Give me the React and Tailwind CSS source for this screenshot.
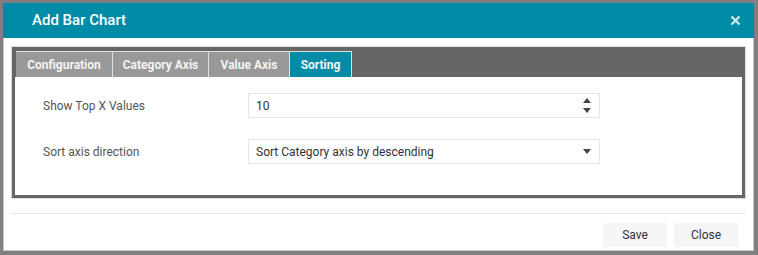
import React from "react";

export default function App() {
  const font = { fontFamily: "Roboto, 'Noto Sans', Arial, sans-serif" };
  return (
    <div className="w-[758px] h-[255px] bg-[#808080] pt-[3px] pl-[3px]" style={font}>
      <div className="w-[751px] h-[248px] bg-white border-x border-b border-[#c8c8c8] flex flex-col">
        <div className="h-[35px] bg-[#008ba7] flex items-center justify-between pl-[29px] pr-[12px] -mx-px">
          <span className="text-white text-[15px] font-medium">Add Bar Chart</span>
          <svg width="11" height="11" viewBox="0 0 11 11" className="mr-[1px]">
            <path d="M1.5 1.5 L9.5 9.5 M9.5 1.5 L1.5 9.5" stroke="#cfe9ef" strokeWidth="2.4" strokeLinecap="butt" />
          </svg>
        </div>
        <div className="mx-[7px] mt-[8px] border border-[#dcdcdc]">
          <div className="bg-[#666666] p-[3px] pt-[4px]">
            <div className="flex h-[26px] ml-[1px]">
              <div className="w-[97px] bg-[#999999] border-t border-r border-[#e0e0e0] flex items-center justify-center text-[12px] font-bold text-[#f4f4f4]">Configuration</div>
              <div className="w-[96px] bg-[#999999] border-t border-r border-[#e0e0e0] flex items-center justify-center text-[12px] font-bold text-[#f4f4f4]">Category Axis</div>
              <div className="w-[81px] bg-[#999999] border-t border-r border-[#e0e0e0] flex items-center justify-center text-[12px] font-bold text-[#f4f4f4]">Value Axis</div>
              <div className="w-[62px] bg-[#008ba7] border-t border-r border-[#e0e0e0] flex items-center justify-center text-[12px] font-bold text-[#f4f4f4]">Sorting</div>
            </div>
            <div className="bg-white h-[118px] pt-[16px]">
              <div className="flex items-center h-[25px]">
                <div className="w-[233px] pl-[28px] text-[12px] text-[#555555]">Show Top X Values</div>
                <div className="w-[352px] h-[25px] border border-[#e6e6e6] flex items-center justify-between pl-[7px] pr-[8px]">
                  <span className="text-[12px] text-[#333333]">10</span>
                  <div className="flex flex-col gap-[5px]">
                    <svg width="8" height="5" viewBox="0 0 8 5"><path d="M4 0 L8 5 L0 5 Z" fill="#444" /></svg>
                    <svg width="8" height="5" viewBox="0 0 8 5"><path d="M0 0 L8 0 L4 5 Z" fill="#444" /></svg>
                  </div>
                </div>
              </div>
              <div className="flex items-center h-[25px] mt-[21px]">
                <div className="w-[233px] pl-[28px] text-[12px] text-[#555555]">Sort axis direction</div>
                <div className="w-[352px] h-[25px] border border-[#e6e6e6] flex items-center justify-between pl-[7px] pr-[8px]">
                  <span className="text-[12px] text-[#333333]">Sort Category axis by descending</span>
                  <svg width="8" height="5" viewBox="0 0 8 5"><path d="M0 0 L8 0 L4 5 Z" fill="#444" /></svg>
                </div>
              </div>
            </div>
          </div>
        </div>
        <div className="mx-[7px] mt-[14px] border-t border-[#e8e8e8]"></div>
        <div className="flex justify-end gap-[7px] pr-[15px] mt-[9px]">
          <button className="w-[64px] h-[24px] bg-[#f5f5f5] text-[12px] text-[#333333]">Save</button>
          <button className="w-[64px] h-[24px] bg-[#f5f5f5] text-[12px] text-[#333333]">Close</button>
        </div>
      </div>
    </div>
  );
}
